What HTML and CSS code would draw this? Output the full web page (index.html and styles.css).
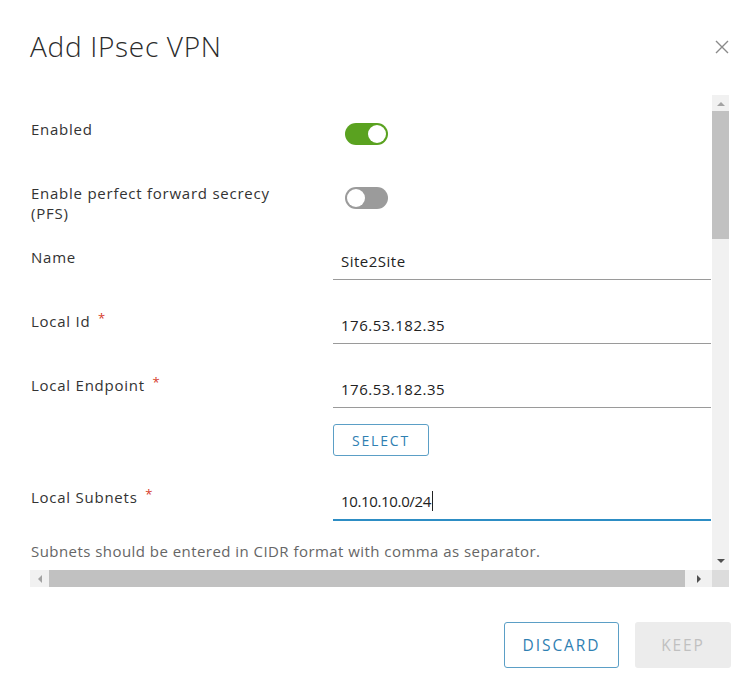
FILE: index.html
```html
<!DOCTYPE html>
<html lang="en">
<head>
<meta charset="utf-8">
<title>Add IPsec VPN</title>
<link rel="stylesheet" href="styles.css">
</head>
<body>
<div class="modal">
  <header class="modal-header">
    <h1 class="modal-title">Add IPsec VPN</h1>
    <button class="close" aria-label="Close">
      <svg width="14" height="14" viewBox="0 0 14 14"><path d="M1 1L13 13M13 1L1 13" stroke="#8a8a8a" stroke-width="1.4" fill="none"/></svg>
    </button>
  </header>

  <div class="scroller">
    <div class="viewport">
      <form class="form">
        <div class="row">
          <div class="label">Enabled</div>
          <div class="field"><span class="toggle on"><span class="knob"></span></span></div>
        </div>
        <div class="row">
          <div class="label">Enable perfect forward secrecy<br>(PFS)</div>
          <div class="field"><span class="toggle off"><span class="knob"></span></span></div>
        </div>
        <div class="row">
          <div class="label">Name</div>
          <div class="field"><div class="input">Site2Site</div></div>
        </div>
        <div class="row">
          <div class="label">Local Id <span class="req">*</span></div>
          <div class="field"><div class="input">176.53.182.35</div></div>
        </div>
        <div class="row tall">
          <div class="label">Local Endpoint <span class="req">*</span></div>
          <div class="field">
            <div class="input">176.53.182.35</div>
            <button type="button" class="btn-select">SELECT</button>
          </div>
        </div>
        <div class="row short">
          <div class="label">Local Subnets <span class="req">*</span></div>
          <div class="field"><div class="input focused"><span class="subnet">10.10.10.0/24</span><span class="caret"></span></div></div>
        </div>
        <p class="hint">Subnets should be entered in CIDR format with comma as separator.</p>
      </form>
    </div>
    <div class="vbar">
      <span class="arrow up"></span>
      <span class="vthumb"></span>
      <span class="vfill"></span>
      <span class="arrow down"></span>
    </div>
    <div class="hbar">
      <span class="arrow left"></span>
      <span class="hthumb"></span>
      <span class="arrow right"></span>
    </div>
    <div class="corner"></div>
  </div>

  <footer class="modal-footer">
    <button class="btn btn-outline">DISCARD</button>
    <button class="btn btn-disabled">KEEP</button>
  </footer>
</div>
</body>
</html>
```

FILE: styles.css
```css
* { box-sizing: border-box; }
html, body { margin: 0; padding: 0; background: #fff; }
body {
  font-family: "Open Sans", Lato, sans-serif;
  color: #333;
  width: 750px;
  height: 683px;
  overflow: hidden;
}
.modal { width: 750px; height: 683px; }

.modal-header {
  height: 95px;
  display: flex;
  align-items: flex-start;
  justify-content: space-between;
  padding: 27px 21px 0 30px;
}
.modal-title {
  margin: 0;
  font-size: 28px;
  font-weight: 300;
  line-height: 38px;
  color: #2b2b2b;
  letter-spacing: 0.7px;
}
.close {
  border: 0;
  background: none;
  padding: 0;
  margin-top: 13px;
  width: 14px;
  height: 14px;
  display: flex;
}

.scroller {
  margin-left: 30px;
  width: 699px;
  display: grid;
  grid-template-columns: 682px 17px;
  grid-template-rows: 475px 17px;
}
.viewport { overflow: hidden; }
.form { padding: 24px 0 0 1px; }

.row {
  display: grid;
  grid-template-columns: 302px 378px;
  height: 64px;
}
.row.tall { height: 112px; }
.row.short { height: 54px; }
.label {
  font-size: 15px;
  line-height: 20px;
  color: #333;
  letter-spacing: 0.75px;
}
.req {
  color: #d63c2a;
  font-size: 13px;
  line-height: 14px;
  vertical-align: top;
  margin-left: 3px;
}

.field { display: flex; flex-direction: column; align-items: flex-start; }

.toggle {
  margin-top: 4px;
  margin-left: 12px;
  width: 43px;
  height: 22px;
  border-radius: 11px;
  display: flex;
  align-items: center;
  padding: 2px;
}
.toggle .knob {
  width: 18px; height: 18px; border-radius: 50%; background: #fff;
}
.toggle.on { background: #5aa220; justify-content: flex-end; }
.toggle.off { background: #9b9b9b; justify-content: flex-start; }

.input {
  width: 378px;
  height: 33px;
  padding: 4px 8px 0;
  font-size: 15px;
  line-height: 20px;
  color: #222;
  letter-spacing: 0.5px;
  border-bottom: 1px solid #9a9a9a;
  display: flex;
  align-items: flex-start;
}
.input.focused { border-bottom: 2px solid #2d8dc4; height: 34px; }
.subnet { letter-spacing: -0.35px; }
.caret { width: 1px; height: 20px; background: #222; margin-left: 1px; }

.btn-select {
  margin-top: 16px;
  width: 96px;
  height: 32px;
  border: 1px solid #5b9fc6;
  border-radius: 3px;
  background: #fff;
  color: #2f80b2;
  font-family: "Open Sans", Lato, sans-serif;
  font-size: 14px;
  letter-spacing: 1.8px;
  font-weight: 400;
  padding: 0;
}

.hint {
  margin: 0;
  font-size: 15px;
  line-height: 20px;
  color: #666;
  letter-spacing: 0.45px;
}

.vbar {
  background: #f1f1f1;
  display: flex;
  flex-direction: column;
  align-items: center;
}
.vthumb { width: 17px; height: 128px; background: #c1c1c1; }
.vfill { flex: 1; }
.hbar {
  background: #f1f1f1;
  display: flex;
  align-items: center;
}
.hthumb { height: 17px; width: 636px; background: #c1c1c1; }
.corner { background: #dcdcdc; }

.arrow { width: 0; height: 0; border-style: solid; flex: none; }
.arrow.up {
  margin: 7px 0 5px;
  border-width: 0 4px 4px 4px;
  border-color: transparent transparent #a3a3a3 transparent;
}
.arrow.down {
  margin: 0 0 7px;
  border-width: 4px 4px 0 4px;
  border-color: #505050 transparent transparent transparent;
}
.arrow.left {
  margin: 0 7px 0 8px;
  border-width: 4px 4px 4px 0;
  border-color: transparent #a3a3a3 transparent transparent;
}
.arrow.right {
  margin: 0 0 0 12px;
  border-width: 4px 0 4px 4px;
  border-color: transparent transparent transparent #505050;
}

.modal-footer {
  display: flex;
  justify-content: flex-end;
  gap: 16px;
  padding: 35px 19px 0 0;
}
.btn {
  height: 46px;
  border-radius: 3px;
  font-family: "Open Sans", Lato, sans-serif;
  font-size: 15.5px;
  letter-spacing: 1.9px;
  padding: 0;
}
.btn-outline {
  width: 115px;
  background: #fff;
  border: 1px solid #5b9fc6;
  color: #2f80b2;
}
.btn-disabled {
  width: 96px;
  background: #ececec;
  border: 0;
  color: #c0c0c0;
}
```
